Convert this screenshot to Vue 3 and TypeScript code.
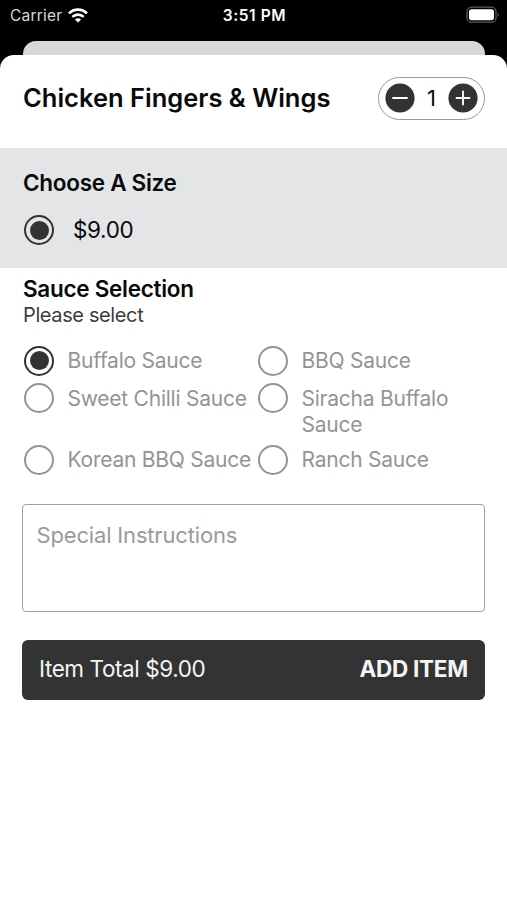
<script setup lang="ts">
import { computed, ref } from 'vue'

const price = 9
const quantity = ref(1)
const selectedSauce = ref('Buffalo Sauce')
const instructions = ref('')
const sauces: string[] = [
  'Buffalo Sauce',
  'BBQ Sauce',
  'Sweet Chilli Sauce',
  'Siracha Buffalo Sauce',
  'Korean BBQ Sauce',
  'Ranch Sauce',
]
const money = (n: number): string => `$${n.toFixed(2)}`
const total = computed(() => money(price * quantity.value))
const decrease = () => {
  quantity.value = Math.max(1, quantity.value - 1)
}
</script>

<template>
  <div class="screen">
    <header class="status">
      <div class="network">
        <span class="carrier">Carrier</span>
        <svg class="wifi" viewBox="0 0 20 15" width="20" height="15">
          <g fill="none" stroke="#fff" stroke-width="2.6">
            <path d="M1 5.4C6.1.4 13.9.4 19 5.4" />
            <path d="M4.3 8.9C7.6 5.8 12.4 5.8 15.7 8.9" />
          </g>
          <path d="M6.9 11.4C8.7 9.8 11.3 9.8 13.1 11.4L10 14.6Z" fill="#fff" />
        </svg>
      </div>
      <span class="time">3:51 PM</span>
      <svg class="battery" viewBox="0 0 34 18" width="34" height="18">
        <rect x="1" y="1.2" width="29" height="15" rx="4.5" fill="none" stroke="#5c5c5c" stroke-width="1.3" />
        <rect x="3" y="3.2" width="25" height="11" rx="2.6" fill="#fff" />
        <path d="M31.7 6.5c1.5.8 1.5 3.6 0 4.4z" fill="#5c5c5c" />
      </svg>
    </header>

    <div class="behind"></div>
    <main class="sheet">
      <div class="heading">
        <h1>Chicken Fingers &amp; Wings</h1>
        <div class="stepper">
          <button class="step" aria-label="Decrease" @click="decrease">
            <svg viewBox="0 0 30 30" width="30" height="30">
              <circle cx="15" cy="15" r="14.6" fill="#333" />
              <path d="M8 15h14" stroke="#fff" stroke-width="1.9" stroke-linecap="round" />
            </svg>
          </button>
          <span class="count">{{ quantity }}</span>
          <button class="step" aria-label="Increase" @click="quantity++">
            <svg viewBox="0 0 30 30" width="30" height="30">
              <circle cx="15" cy="15" r="14.6" fill="#333" />
              <path d="M8.5 15h13M15 8.5v13" stroke="#fff" stroke-width="1.9" stroke-linecap="round" />
            </svg>
          </button>
        </div>
      </div>

      <section class="size">
        <h2 class="size-title">Choose A Size</h2>
        <div class="size-option">
          <span class="radio checked"></span>
          <span class="size-price">{{ money(price) }}</span>
        </div>
      </section>

      <section class="sauce">
        <h2 class="sauce-title">Sauce Selection</h2>
        <p class="hint">Please select</p>
        <div class="options">
          <div v-for="s in sauces" :key="s" class="option" @click="selectedSauce = s">
            <span class="radio" :class="{ checked: selectedSauce === s }"></span>
            <span class="label">{{ s }}</span>
          </div>
        </div>
      </section>

      <textarea v-model="instructions" class="notes" placeholder="Special Instructions"></textarea>

      <button class="add">
        <span class="total">Item Total {{ total }}</span>
        <span class="cta">ADD ITEM</span>
      </button>
    </main>
  </div>
</template>

<style>
body {
  background: #000;
}
</style>

<style scoped>
.screen {
  box-sizing: border-box;
  display: flex;
  flex-direction: column;
  height: 900px;
  overflow: hidden;
  background: #000;
  color: #0a0a0a;
  font-family: Inter, 'Liberation Sans', sans-serif;
}
.status {
  box-sizing: border-box;
  display: grid;
  grid-template-columns: 1fr auto 1fr;
  align-items: center;
  height: 41px;
  padding: 0 7px 11px 10px;
  color: #fff;
}
.network {
  display: flex;
  align-items: center;
  gap: 6px;
}
.carrier {
  color: #d8d8d8;
  font-size: 15.5px;
  letter-spacing: 0.2px;
}
.time {
  margin-left: -1px;
  font-size: 15.5px;
  font-weight: 600;
  letter-spacing: 0.6px;
}
.battery {
  justify-self: end;
  margin-top: -1px;
}
.behind {
  flex: none;
  height: 14px;
  margin: 0 22px 0 23px;
  border-radius: 13px 13px 0 0;
  background: #d8d8d8;
}
.sheet {
  flex: 1;
  border-radius: 14px 14px 0 0;
  background: #fff;
}
.heading {
  box-sizing: border-box;
  display: flex;
  align-items: center;
  justify-content: space-between;
  height: 93px;
  padding: 0 22px 7px 23px;
}
h1,
h2,
p {
  margin: 0;
}
h1 {
  margin-top: -1px;
  font-size: 25.5px;
  font-weight: 600;
  letter-spacing: 0;
  white-space: nowrap;
}
.stepper {
  box-sizing: border-box;
  display: flex;
  align-items: center;
  justify-content: space-between;
  width: 107px;
  height: 43px;
  padding: 0 6px;
  border: 1.5px solid #999;
  border-radius: 22px;
}
.step {
  display: flex;
  padding: 0;
  border: 0;
  background: none;
}
.count {
  font-size: 22px;
}
.size {
  box-sizing: border-box;
  height: 120px;
  padding: 20px 23px 0;
  background: #e3e5e7;
}
h2 {
  font-size: 22.5px;
  font-weight: 600;
  letter-spacing: -0.28px;
  line-height: 30px;
}
.size-option {
  display: flex;
  align-items: center;
  gap: 19px;
  margin-top: 17px;
  padding-left: 1px;
}
.size-price {
  font-size: 22.5px;
  letter-spacing: -0.35px;
  line-height: 30px;
}
.radio {
  position: relative;
  box-sizing: border-box;
  flex: none;
  width: 30px;
  height: 30px;
  border: 2px solid #949496;
  border-radius: 50%;
}
.radio.checked {
  border-color: #333;
}
.radio.checked::after {
  content: '';
  position: absolute;
  inset: 3.5px;
  border-radius: 50%;
  background: #333;
}
.sauce {
  padding: 5px 0 0 23px;
}
.sauce-title {
  line-height: 31px;
}
.hint {
  color: #3c3c3e;
  font-size: 20px;
  letter-spacing: -0.38px;
  line-height: 23px;
}
.options {
  display: grid;
  grid-template-columns: 234px 234px;
  row-gap: 7.5px;
  margin-top: 18.5px;
  padding-left: 1px;
}
.option {
  display: flex;
  align-items: flex-start;
  gap: 13.5px;
}
.label {
  max-width: 190px;
  margin-bottom: -1.6px;
  padding-top: 2.6px;
  color: #949496;
  font-size: 21px;
  letter-spacing: -0.24px;
  line-height: 26.5px;
}
.option:nth-child(odd) .label {
  white-space: nowrap;
}
.option:nth-child(even) .label {
  max-width: 170px;
}
.notes {
  box-sizing: border-box;
  display: block;
  width: 463px;
  height: 108px;
  margin: 29px 0 0 22px;
  padding: 17px 13.5px;
  border: 1.5px solid #a0a0a0;
  border-radius: 4px;
  outline: 0;
  background: #fff;
  resize: none;
  font: 22px/27px Inter, 'Liberation Sans', sans-serif;
  letter-spacing: -0.17px;
}
.notes::placeholder {
  color: #9a9a9c;
  opacity: 1;
}
.add {
  box-sizing: border-box;
  display: flex;
  align-items: center;
  justify-content: space-between;
  width: 463px;
  height: 60px;
  margin: 28px 0 0 22px;
  padding: 0 17px 2px;
  border: 0;
  border-radius: 6px;
  background: #333;
  color: #f4f4f4;
  font: 22.5px Inter, 'Liberation Sans', sans-serif;
}
.total {
  letter-spacing: -0.42px;
}
.cta {
  font-weight: 700;
  letter-spacing: -0.25px;
}
</style>
